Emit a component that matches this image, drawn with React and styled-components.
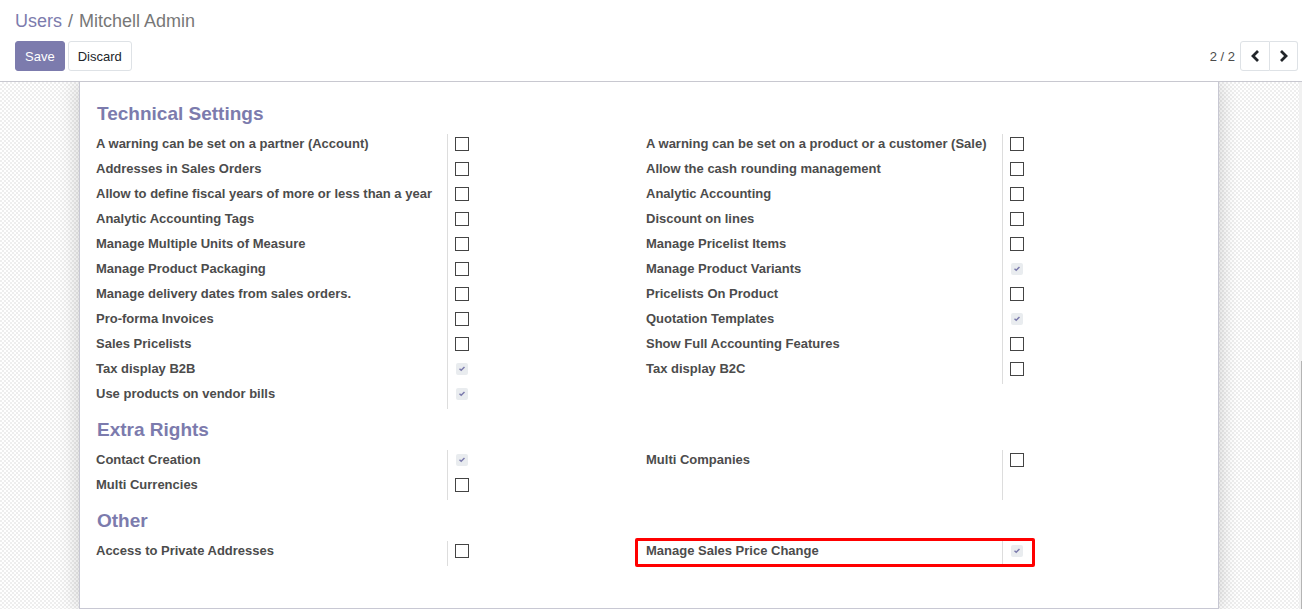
import React from "react";
import styled, { createGlobalStyle } from "styled-components";

const GlobalStyle = createGlobalStyle`
  *, *::before, *::after { box-sizing: border-box; }
  html, body { margin: 0; background: #fff; }
  body {
    font-family: "Liberation Sans", Arial, sans-serif;
    font-size: 13px;
    line-height: 20px;
    color: #4c4c4c;
  }
  button, input { font: inherit; margin: 0; }
`;

const Page = styled.div`
  display: flex;
  flex-direction: column;
  min-height: 100vh;
`;

const ControlPanel = styled.header`
  padding: 8px 4px 10px 15px;
  border-bottom: 1px solid #c8c8d0;
  background: #fff;
`;

const Breadcrumb = styled.nav`
  font-size: 18px;
  line-height: 27px;
  color: #777;
`;

const Crumb = styled.a`
  color: #7c7bad;
  text-decoration: none;
`;

const Separator = styled.span`
  padding: 0 6px;
`;

const Toolbar = styled.div`
  display: flex;
  align-items: center;
  justify-content: space-between;
  margin-top: 6px;
`;

const ButtonRow = styled.div`
  display: flex;
  gap: 3px;
`;

const Button = styled.button`
  height: 30px;
  padding: 2px 9px 0;
  border: 1px solid ${(p) => (p.$primary ? "#7c7bad" : "#dee2e6")};
  border-radius: 3px;
  background: ${(p) => (p.$primary ? "#7c7bad" : "#fff")};
  color: ${(p) => (p.$primary ? "#fff" : "#212529")};
`;

const Pager = styled.div`
  display: flex;
  align-items: center;
`;

const PagerCount = styled.span`
  padding: 2px 5px 0 0;
`;

const PagerButton = styled.button`
  display: flex;
  align-items: center;
  justify-content: center;
  width: ${(p) => (p.$next ? 28 : 30)}px;
  height: 30px;
  padding: 0;
  border: 1px solid #dee2e6;
  border-left-width: ${(p) => (p.$next ? 0 : 1)}px;
  border-radius: ${(p) => (p.$next ? "0 3px 3px 0" : "3px 0 0 3px")};
  background: #fff;
  color: #212529;
`;

const Content = styled.main`
  position: relative;
  flex: 1;
  padding-right: 4px;
  overflow: hidden;
  background: repeating-conic-gradient(#eee 0 25%, #fff 0 50%) 0 0 / 4px 4px;
`;

const ScrollTrack = styled.div`
  position: absolute;
  top: 0;
  right: 0;
  bottom: 0;
  width: 3px;
  background: #f1f1f1;

  &::after {
    content: "";
    position: absolute;
    top: 53%;
    right: 0;
    bottom: 0;
    width: 1px;
    background: #b4b4b4;
  }
`;

const Sheet = styled.form`
  max-width: 1140px;
  margin: 0 auto;
  padding: 11px 22px 42px 16px;
  border: 1px solid #c8c8d3;
  border-top: 0;
  background: #fff;
  box-shadow: 0 0 20px rgba(0, 0, 0, 0.2);
`;

const Section = styled.section`
  display: grid;
  grid-template-columns: 1fr 1fr;
  align-items: start;
`;

const Heading = styled.h2`
  grid-column: 1 / -1;
  height: 41px;
  margin: 0;
  padding-left: 1px;
  font-size: 19px;
  line-height: 41px;
  color: #7c7bad;
`;

const Column = styled.div`
  display: flex;
  flex-direction: column;
`;

const Row = styled.div`
  position: relative;
  display: grid;
  grid-template-columns: ${(p) => (p.$right ? 356 : 351)}px 1fr;
  height: 25px;
`;

const Label = styled.label`
  font-weight: bold;
  white-space: nowrap;
`;

const Cell = styled.div`
  display: flex;
  align-items: center;
  padding: 0 0 5px 7px;
  border-left: 1px solid #ddd;
`;

const CheckWrap = styled.span`
  position: relative;
  display: grid;
  place-items: center;
  width: 14px;
  height: 14px;

  svg { position: absolute; pointer-events: none; }
`;

const Checkbox = styled.input`
  appearance: none;
  width: 14px;
  height: 14px;
  border: 1px solid #444;
  background: #fff;

  &:checked {
    width: 12px;
    height: 12px;
    border: 0;
    border-radius: 2px;
    background: #e9ecef;
  }
`;

const Highlight = styled.span`
  position: absolute;
  top: -3px;
  left: -11px;
  width: 400px;
  height: 29px;
  border: 3px solid #f00;
  border-radius: 2px;
  pointer-events: none;
`;

const sections = [
  {
    title: "Technical Settings",
    left: [
      ["A warning can be set on a partner (Account)"],
      ["Addresses in Sales Orders"],
      ["Allow to define fiscal years of more or less than a year"],
      ["Analytic Accounting Tags"],
      ["Manage Multiple Units of Measure"],
      ["Manage Product Packaging"],
      ["Manage delivery dates from sales orders."],
      ["Pro-forma Invoices"],
      ["Sales Pricelists"],
      ["Tax display B2B", true],
      ["Use products on vendor bills", true],
    ],
    right: [
      ["A warning can be set on a product or a customer (Sale)"],
      ["Allow the cash rounding management"],
      ["Analytic Accounting"],
      ["Discount on lines"],
      ["Manage Pricelist Items"],
      ["Manage Product Variants", true],
      ["Pricelists On Product"],
      ["Quotation Templates", true],
      ["Show Full Accounting Features"],
      ["Tax display B2C"],
    ],
  },
  {
    title: "Extra Rights",
    left: [["Contact Creation", true], ["Multi Currencies"]],
    right: [["Multi Companies"], [null]],
  },
  {
    title: "Other",
    left: [["Access to Private Addresses"]],
    right: [["Manage Sales Price Change", true, true]],
  },
];

function Setting({ id, name, checked, marked, right }) {
  if (!name) {
    return (
      <Row $right={right}>
        <span />
        <Cell />
      </Row>
    );
  }
  return (
    <Row $right={right}>
      <Label htmlFor={id}>{name}</Label>
      <Cell>
        <CheckWrap>
          <Checkbox id={id} type="checkbox" checked={!!checked} readOnly />
          {checked && (
            <svg width="6" height="6" viewBox="0 0 6 6" fill="none" aria-hidden="true">
              <path d="M0.5 2.7 L2.2 4.2 L5.5 1" stroke="#7c7bad" strokeWidth="1.5" />
            </svg>
          )}
        </CheckWrap>
      </Cell>
      {marked && <Highlight />}
    </Row>
  );
}

function SettingColumn({ prefix, items, right }) {
  return (
    <Column>
      {items.map(([name, checked, marked], i) => (
        <Setting
          key={i}
          id={`${prefix}-${i}`}
          name={name}
          checked={checked}
          marked={marked}
          right={right}
        />
      ))}
    </Column>
  );
}

function Chevron({ d }) {
  return (
    <svg width="12" height="14" viewBox="0 0 12 14" fill="none" aria-hidden="true">
      <path d={d} stroke="currentColor" strokeWidth="2.8" />
    </svg>
  );
}

export default function App() {
  return (
    <Page>
      <GlobalStyle />
      <ControlPanel>
        <Breadcrumb aria-label="Breadcrumb">
          <Crumb href="#users">Users</Crumb>
          <Separator>/</Separator>
          <span>Mitchell Admin</span>
        </Breadcrumb>
        <Toolbar>
          <ButtonRow>
            <Button type="button" $primary>Save</Button>
            <Button type="button">Discard</Button>
          </ButtonRow>
          <Pager>
            <PagerCount>2 / 2</PagerCount>
            <PagerButton type="button" aria-label="Previous">
              <Chevron d="M9 2 L4 7 L9 12" />
            </PagerButton>
            <PagerButton type="button" aria-label="Next" $next>
              <Chevron d="M3 2 L8 7 L3 12" />
            </PagerButton>
          </Pager>
        </Toolbar>
      </ControlPanel>
      <Content>
        <Sheet>
          {sections.map((s, i) => (
            <Section key={s.title}>
              <Heading>{s.title}</Heading>
              <SettingColumn prefix={`l${i}`} items={s.left} />
              <SettingColumn prefix={`r${i}`} items={s.right} right />
            </Section>
          ))}
        </Sheet>
        <ScrollTrack />
      </Content>
    </Page>
  );
}
